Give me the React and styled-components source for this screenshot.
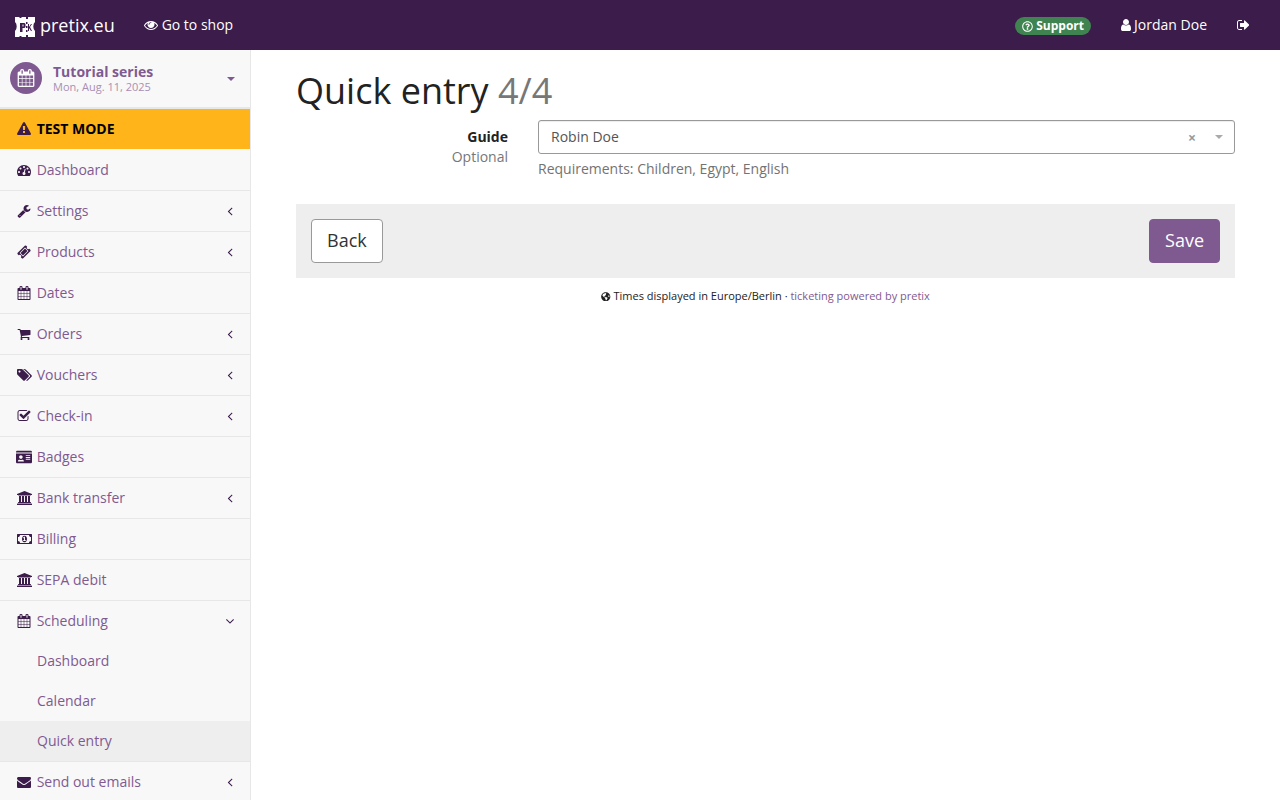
import React from "react";
import styled, { createGlobalStyle } from "styled-components";
import { FaGlobeAmericas, FaIdCard, FaRegQuestionCircle } from "react-icons/fa";

const GlobalStyle = createGlobalStyle`
  html, body {
    margin: 0;
    height: 100%;
    overflow: hidden;
    background: #fff;
  }
  body {
    font-family: "Open Sans", "Liberation Sans", sans-serif;
    font-size: 14px;
    line-height: 20px;
    color: #222;
  }
  * { box-sizing: border-box; }
`;

const Page = styled.div`
  width: 1280px;
  height: 800px;
  overflow: hidden;
  display: flex;
  flex-direction: column;
`;
const TopBar = styled.header`
  height: 50px;
  flex: none;
  background: #3b1c4a;
  color: #fff;
  display: flex;
  align-items: center;
`;
const Brand = styled.div`
  display: flex;
  align-items: center;
  gap: 5px;
  margin-left: 15px;
  font-size: 18px;
  width: 129px;
`;
const LogoMark = styled.svg`
  margin-top: 3px;
`;
const TopLink = styled.div`
  display: flex;
  align-items: center;
  gap: 3.64px;
`;
const Spacer = styled.div`flex: 1;`;
const SupportBadge = styled.div`
  display: flex;
  align-items: center;
  gap: 3px;
  height: 18px;
  padding: 0 7.5px;
  margin-right: 29.6px;
  margin-top: 2px;
  border-radius: 9px;
  background: #3f8450;
  font-size: 12px;
  font-weight: 700;
  svg { font-size: 11px; }
`;
const UserLink = styled(TopLink)`
  gap: 3px;
  margin-right: 30px;
`;
const LogoutLink = styled(TopLink)`margin-right: 30.75px;`;

const Body = styled.div`
  flex: 1;
  display: flex;
  min-height: 0;
`;
const Sidebar = styled.nav`
  width: 251px;
  flex: none;
  background: #f8f8f8;
  border-right: 1px solid #e7e7e7;
  overflow: hidden;
`;
const EventHeader = styled.div`
  height: 59px;
  display: flex;
  align-items: center;
  padding: 0 15px 1px 10px;
  border-bottom: 2px solid #e7e7e7;
`;
const EventIcon = styled.div`
  width: 32px;
  height: 32px;
  border-radius: 50%;
  background: #7f5a91;
  color: #fff;
  display: flex;
  align-items: center;
  justify-content: center;
  margin-right: 11px;
`;
const EventText = styled.div`
  flex: 1;
  color: #7f5a91;
  min-width: 0;
`;
const EventName = styled.div`
  font-weight: 700;
  font-size: 14px;
  line-height: 16px;
`;
const EventDate = styled.div`
  font-size: 11px;
  line-height: 13px;
  color: #a78fb3;
`;
const Caret = styled.span`
  width: 0;
  height: 0;
  border-left: 4px solid transparent;
  border-right: 4px solid transparent;
  border-top: 4px solid ${(p) => p.$color};
`;
const EventCaret = styled(Caret)`margin-top: 1px;`;
const TestMode = styled.div`
  height: 41px;
  display: flex;
  align-items: center;
  padding: 0 0 1px 15px;
  background: #ffb419;
  border-bottom: 1px solid #f8f8f8;
  color: #000;
  font-weight: 700;
`;
const NavRow = styled.div`
  height: ${(p) => (p.$open ? 40 : 41)}px;
  display: flex;
  align-items: center;
  padding: ${(p) => (p.$open ? "0 13px 0 15px" : "0 13px 1px 15px")};
  color: #7f5a91;
  border-bottom: ${(p) => (p.$open ? "none" : "1px solid #e7e7e7")};
`;
const SubRow = styled.div`
  height: ${(p) => (p.$last ? 41 : 40)}px;
  display: flex;
  align-items: center;
  padding: ${(p) => (p.$last ? "0 0 1px 37px" : "0 0 0 37px")};
  color: #7f5a91;
  background: ${(p) => (p.$active ? "#eeeeee" : "transparent")};
  border-bottom: ${(p) => (p.$last ? "1px solid #e7e7e7" : "none")};
`;
const IconBox = styled.span`
  width: 18px;
  flex: none;
  margin-right: 3.64px;
  display: flex;
  align-items: center;
  justify-content: center;
  color: #3b1c4a;
  font-size: 16px;
`;
const NavLabel = styled.span`flex: 1;`;
const ArrowBox = styled.span`
  display: flex;
  color: #3b1c4a;
`;

const Main = styled.main`
  flex: 1;
  padding: 0 45px;
  min-width: 0;
`;
const Title = styled.h1`
  margin: 21px 0 9px;
  font-size: 36px;
  font-weight: 400;
  line-height: 40px;
  color: #222;
`;
const Step = styled.span`color: #777;`;
const FormRow = styled.div`
  display: grid;
  grid-template-columns: 212px 1fr;
  column-gap: 30px;
`;
const LabelCol = styled.div`
  text-align: right;
  padding-top: 7px;
`;
const LabelName = styled.div`font-weight: 700;`;
const LabelHint = styled.div`color: #777;`;
const SelectBox = styled.div`
  height: 34px;
  display: flex;
  align-items: center;
  padding: 0 11px 0 12px;
  border: 1px solid #999;
  border-radius: 3px;
  box-shadow: inset 0 1px 1px rgba(0, 0, 0, 0.075);
  color: #555;
`;
const SelectValue = styled.span`flex: 1;`;
const SelectClear = styled.span`
  color: #999;
  font-size: 14px;
  font-weight: 700;
  margin: 2px 19px 0 0;
`;
const HelpText = styled.div`
  margin-top: 5px;
  color: #737373;
`;
const Actions = styled.div`
  margin-top: 25px;
  height: 74px;
  padding: 15px;
  background: #eeeeee;
  display: flex;
  justify-content: space-between;
`;
const Button = styled.button`
  height: 44px;
  padding: 0 15px 2px;
  font: inherit;
  font-size: 18px;
  border-radius: 4px;
  border: 1px solid ${(p) => (p.$primary ? "#7f5a91" : "#999")};
  background: ${(p) => (p.$primary ? "#7f5a91" : "#fff")};
  color: ${(p) => (p.$primary ? "#fff" : "#333")};
`;
const Footer = styled.footer`
  margin-top: 8px;
  text-align: center;
  font-size: 11px;
  line-height: 20px;
  svg { font-size: 9.5px; vertical-align: -1px; }
`;
const FooterLink = styled.span`color: #7f5a91;`;

// FontAwesome 4 glyphs, same 1792 grid as the font
const GLYPHS = {
  dashboard: { d: "M384 1152q0-53-37.5-90.5t-90.5-37.5-90.5 37.5-37.5 90.5 37.5 90.5 90.5 37.5 90.5-37.5 37.5-90.5zm192-448q0-53-37.5-90.5t-90.5-37.5-90.5 37.5-37.5 90.5 37.5 90.5 90.5 37.5 90.5-37.5 37.5-90.5zm428 481l101-382q6-26-7.5-48.5t-38.5-29.5-48 6.5-30 39.5l-101 382q-60 5-107 43.5t-63 98.5q-20 77 20 146t117 89 146-20 89-117q16-60-6-117t-72-91zm660-33q0-53-37.5-90.5t-90.5-37.5-90.5 37.5-37.5 90.5 37.5 90.5 90.5 37.5 90.5-37.5 37.5-90.5zm-640-640q0-53-37.5-90.5t-90.5-37.5-90.5 37.5-37.5 90.5 37.5 90.5 90.5 37.5 90.5-37.5 37.5-90.5zm448 192q0-53-37.5-90.5t-90.5-37.5-90.5 37.5-37.5 90.5 37.5 90.5 90.5 37.5 90.5-37.5 37.5-90.5zm320 448q0 261-141 483-19 29-54 29h-1402q-35 0-54-29-141-221-141-483 0-182 71-348t191-286 286-191 348-71 348 71 286 191 191 286 71 348z" },
  wrench: { d: "M448 1472q0-26-19-45t-45-19-45 19-19 45 19 45 45 19 45-19 19-45zm644-420l-682 682q-37 37-90 37-52 0-91-37l-106-108q-38-36-38-90 0-53 38-91l681-681q39 98 114.5 173.5t173.5 114.5zm634-435q0 39-23 106-47 134-164.5 217.5t-258.5 83.5q-185 0-316.5-131.5t-131.5-316.5 131.5-316.5 316.5-131.5q58 0 121.5 16.5t107.5 46.5q16 11 16 28t-16 28l-293 169v224l193 111q5-3 79-48.5t135.5-81 70.5-35.5q15 0 23.5 10t8.5 25z" },
  ticket: { d: "M1024 452l316 316-572 572-316-316zm-211 979l618-618q19-19 19-45t-19-45l-362-362q-18-18-45-18t-45 18l-618 618q-19 19-19 45t19 45l362 362q18 18 45 18t45-18zm889-637l-907 908q-37 37-90.5 37t-90.5-37l-126-126q56-56 56-136t-56-136-136-56-136 56l-125-126q-37-37-37-90.5t37-90.5l907-906q37-37 90.5-37t90.5 37l125 125q-56 56-56 136t56 136 136 56 136-56l126 125q37 37 37 90.5t-37 90.5z" },
  calendar: { d: "M192 1664h288v-288h-288v288zm352 0h320v-288h-320v288zm-352-352h288v-320h-288v320zm352 0h320v-320h-320v320zm-352-384h288v-288h-288v288zm736 736h320v-288h-320v288zm-384-736h320v-288h-320v288zm768 736h288v-288h-288v288zm-384-352h320v-320h-320v320zm-352-864v-288q0-13-9.5-22.5t-22.5-9.5h-64q-13 0-22.5 9.5t-9.5 22.5v288q0 13 9.5 22.5t22.5 9.5h64q13 0 22.5-9.5t9.5-22.5zm736 864h288v-320h-288v320zm-384-384h320v-288h-320v288zm384 0h288v-288h-288v288zm32-480v-288q0-13-9.5-22.5t-22.5-9.5h-64q-13 0-22.5 9.5t-9.5 22.5v288q0 13 9.5 22.5t22.5 9.5h64q13 0 22.5-9.5t9.5-22.5zm384-64v1280q0 52-38 90t-90 38h-1408q-52 0-90-38t-38-90v-1280q0-52 38-90t90-38h128v-96q0-66 47-113t113-47h64q66 0 113 47t47 113v96h384v-96q0-66 47-113t113-47h64q66 0 113 47t47 113v96h128q52 0 90 38t38 90z" },
  cart: { d: "M704 1536q0 52-38 90t-90 38-90-38-38-90 38-90 90-38 90 38 38 90zm896 0q0 52-38 90t-90 38-90-38-38-90 38-90 90-38 90 38 38 90zm128-1088v512q0 24-16.5 42.5t-40.5 21.5l-1044 122q13 60 13 70 0 16-24 64h920q26 0 45 19t19 45-19 45-45 19h-1024q-26 0-45-19t-19-45q0-11 8-31.5t16-36 21.5-40 15.5-29.5l-177-823h-204q-26 0-45-19t-19-45 19-45 45-19h256q16 0 28.5 6.5t19.5 15.5 13 24.5 8 26 5.5 29.5 4.5 26h1201q26 0 45 19t19 45z" },
  tags: { box: "-64 0 1920 1792", d: "M384 448q0-53-37.5-90.5t-90.5-37.5-90.5 37.5-37.5 90.5 37.5 90.5 90.5 37.5 90.5-37.5 37.5-90.5zm1067 576q0 53-37 90l-491 492q-39 37-91 37-53 0-90-37l-715-716q-38-37-64.5-101t-26.5-117v-416q0-52 38-90t90-38h416q53 0 117 26.5t102 64.5l715 714q37 39 37 91zm384 0q0 53-37 90l-491 492q-39 37-91 37-36 0-59-14t-53-45l470-470q37-37 37-90 0-52-37-91l-715-714q-38-38-102-64.5t-117-26.5h224q53 0 117 26.5t102 64.5l715 714q37 39 37 91z" },
  check: { d: "M1472 930v318q0 119-84.5 203.5t-203.5 84.5h-832q-119 0-203.5-84.5t-84.5-203.5v-832q0-119 84.5-203.5t203.5-84.5h832q63 0 117 25 15 7 18 23 3 17-9 29l-49 49q-10 10-23 10-3 0-9-2-23-6-45-6h-832q-66 0-113 47t-47 113v832q0 66 47 113t113 47h832q66 0 113-47t47-113v-254q0-13 9-22l64-64q10-10 23-10 6 0 12 3 20 8 20 29zm231-489l-814 814q-24 24-57 24t-57-24l-430-430q-24-24-24-57t24-57l110-110q24-24 57-24t57 24l263 263 647-647q24-24 57-24t57 24l110 110q24 24 24 57t-24 57z" },
  bank: { box: "0 0 1920 1792", d: "M960 0l960 384v128h-128q0 26-20.5 45t-48.5 19h-1526q-28 0-48.5-19t-20.5-45h-128v-128zm-704 640h256v768h128v-768h256v768h128v-768h256v768h128v-768h256v768h59q28 0 48.5 19t20.5 45v64h-1664v-64q0-26 20.5-45t48.5-19h59v-768zm1595 960q28 0 48.5 19t20.5 45v128h-1920v-128q0-26 20.5-45t48.5-19h1782z" },
  money: { box: "-64 0 1920 1792", d: "M704 1152h384v-96h-128v-448h-114l-148 137 77 80q42-37 55-57h2v288h-128v96zm512-256q0 70-21 142t-59.5 134-101.5 101-138 39-138-39-101.5-101-59.5-134-21-142 21-142 59.5-134 101.5-101 138-39 138 39 101.5 101 59.5 134 21 142zm512 256v-512q-106 0-181-75t-75-181h-1152q0 106-75 181t-181 75v512q106 0 181 75t75 181h1152q0-106 75-181t181-75zm128-832v1152q0 26-19 45t-45 19h-1792q-26 0-45-19t-19-45v-1152q0-26 19-45t45-19h1792q26 0 45 19t19 45z" },
  envelope: { d: "M1792 710v794q0 66-47 113t-113 47h-1472q-66 0-113-47t-47-113v-794q44 49 101 87 362 246 497 345 57 42 92.5 65.5t94.5 48 110 24.5h2q51 0 110-24.5t94.5-48 92.5-65.5q170-123 498-345 57-39 100-87zm0-294q0 79-49 151t-122 123q-376 261-468 325-10 7-42.5 30.5t-54 38-52 32.5-57.5 27-50 9h-2q-23 0-50-9t-57.5-27-52-32.5-54-38-42.5-30.5q-91-64-262-182.5t-205-142.5q-62-42-117-115.5t-55-136.5q0-78 41.5-130t118.5-52h1472q65 0 112.5 47t47.5 113z" },
  warning: { d: "M1024 1375v-190q0-14-9.5-23.5t-22.5-9.5h-192q-13 0-22.5 9.5t-9.5 23.5v190q0 14 9.5 23.5t22.5 9.5h192q13 0 22.5-9.5t9.5-23.5zm-2-374l18-459q0-12-10-19-13-11-24-11h-220q-11 0-24 11-10 7-10 21l17 457q0 10 10 16.5t24 6.5h185q14 0 23.5-6.5t10.5-16.5zm-14-934l768 1408q35 63-2 126-17 29-46.5 46t-63.5 17h-1536q-34 0-63.5-17t-46.5-46q-37-63-2-126l768-1408q17-31 47-49t65-18 65 18 47 49z" },
  eye: { d: "M1664 960q-152-236-381-353 61 104 61 225 0 185-131.5 316.5t-316.5 131.5-316.5-131.5-131.5-316.5q0-121 61-225-229 117-381 353 133 205 333.5 326.5t434.5 121.5 434.5-121.5 333.5-326.5zm-720-384q0-20-14-34t-34-14q-125 0-214.5 89.5t-89.5 214.5q0 20 14 34t34 14 34-14 14-34q0-86 61-147t147-61q20 0 34-14t14-34zm848 384q0 34-20 69-140 230-376.5 368.5t-499.5 138.5-499.5-139-376.5-368q-20-35-20-69t20-69q140-229 376.5-368t499.5-139 499.5 139 376.5 368q20 35 20 69z" },
  user: { box: "256 0 1280 1792", d: "M1536 1399q0 109-62.5 187t-150.5 78h-854q-88 0-150.5-78t-62.5-187q0-85 8.5-160.5t31.5-152 58.5-131 94-89 134.5-34.5q131 128 313 128t313-128q76 0 134.5 34.5t94 89 58.5 131 31.5 152 8.5 160.5zm-256-887q0 159-112.5 271.5t-271.5 112.5-271.5-112.5-112.5-271.5 112.5-271.5 271.5-112.5 271.5 112.5 112.5 271.5z" },
  signOut: { box: "64 0 1568 1792", d: "M704 1440q0 4 1 20t.5 26.5-3 23.5-10 19.5-20.5 6.5h-320q-119 0-203.5-84.5t-84.5-203.5v-704q0-119 84.5-203.5t203.5-84.5h320q13 0 22.5 9.5t9.5 22.5q0 4 1 20t.5 26.5-3 23.5-10 19.5-20.5 6.5h-320q-66 0-113 47t-47 113v704q0 66 47 113t113 47h312l11.5 1 11.5 3 8 5.5 7 9 2 13.5zm928-544q0 26-19 45l-544 544q-19 19-45 19t-45-19-19-45v-288h-448q-26 0-45-19t-19-45v-384q0-26 19-45t45-19h448v-288q0-26 19-45t45-19 45 19l544 544q19 19 19 45z" },
  angleLeft: { d: "M1203 544q0 13-10 23l-393 393 393 393q10 10 10 23t-10 23l-50 50q-10 10-23 10t-23-10l-466-466q-10-10-10-23t10-23l466-466q10-10 23-10t23 10l50 50q10 10 10 23z" },
  angleDown: { d: "M1395 736q0 13-10 23l-466 466q-10 10-23 10t-23-10l-466-466q-10-10-10-23t10-23l50-50q10-10 23-10t23 10l393 393 393-393q10-10 23-10t23 10l50 50q10 10 10 23z" },
};

function Glyph({ name, size = 14 }) {
  const { d, box = "0 0 1792 1792" } = GLYPHS[name];
  const width = (Number(box.split(" ")[2]) / 1792) * size;
  return (
    <svg width={width} height={size} viewBox={box} fill="currentColor" aria-hidden="true">
      <path d={d} />
    </svg>
  );
}

const Logo = () => (
  <LogoMark width="20" height="20" viewBox="0 0 20 20" aria-hidden="true">
    <path
      fill="#fff"
      d="M0 0h4l1 1h1l1-1h4v2h2v-2h7v5a3 5 0 0 0 0 9v6h-7v-2h-2v2H7l-1-1H5l-1 1H0v-6a3 5 0 0 0 0-9z"
    />
    <path fill="#3b1c4a" d="M11 5h1.5v2H11zM11 9h1.5v2H11zM11 13h1.5v2H11z" />
    <path fill="#3b1c4a" fillRule="evenodd" d="M5 6h4.5l1 1v3l-1 1H7.5v4H5zM7.5 7.5v2h1v-2z" />
    <path fill="#3b1c4a" d="M13 7h1v3l2-3h1l-2 3 2 4h-1l-2-3v3h-1z" />
  </LogoMark>
);

const items = [
  { label: "Dashboard", icon: <Glyph name="dashboard" /> },
  { label: "Settings", icon: <Glyph name="wrench" />, arrow: true },
  { label: "Products", icon: <Glyph name="ticket" />, arrow: true },
  { label: "Dates", icon: <Glyph name="calendar" /> },
  { label: "Orders", icon: <Glyph name="cart" />, arrow: true },
  { label: "Vouchers", icon: <Glyph name="tags" />, arrow: true },
  { label: "Check-in", icon: <Glyph name="check" />, arrow: true },
  { label: "Badges", icon: <FaIdCard /> },
  { label: "Bank transfer", icon: <Glyph name="bank" />, arrow: true },
  { label: "Billing", icon: <Glyph name="money" /> },
  { label: "SEPA debit", icon: <Glyph name="bank" /> },
];

export default function App() {
  return (
    <Page>
      <GlobalStyle />
      <TopBar>
        <Brand>
          <Logo />
          pretix.eu
        </Brand>
        <TopLink>
          <Glyph name="eye" />
          Go to shop
        </TopLink>
        <Spacer />
        <SupportBadge>
          <FaRegQuestionCircle />
          Support
        </SupportBadge>
        <UserLink>
          <Glyph name="user" />
          Jordan Doe
        </UserLink>
        <LogoutLink>
          <Glyph name="signOut" />
        </LogoutLink>
      </TopBar>
      <Body>
        <Sidebar>
          <EventHeader>
            <EventIcon>
              <Glyph name="calendar" size={18} />
            </EventIcon>
            <EventText>
              <EventName>Tutorial series</EventName>
              <EventDate>Mon, Aug. 11, 2025</EventDate>
            </EventText>
            <EventCaret $color="#7f5a91" />
          </EventHeader>
          <TestMode>
            <IconBox>
              <Glyph name="warning" />
            </IconBox>
            TEST MODE
          </TestMode>
          {items.map((item) => (
            <NavRow key={item.label}>
              <IconBox>{item.icon}</IconBox>
              <NavLabel>{item.label}</NavLabel>
              {item.arrow && (
                <ArrowBox>
                  <Glyph name="angleLeft" />
                </ArrowBox>
              )}
            </NavRow>
          ))}
          <NavRow $open>
            <IconBox>
              <Glyph name="calendar" />
            </IconBox>
            <NavLabel>Scheduling</NavLabel>
            <ArrowBox>
              <Glyph name="angleDown" />
            </ArrowBox>
          </NavRow>
          <SubRow>Dashboard</SubRow>
          <SubRow>Calendar</SubRow>
          <SubRow $active $last>
            Quick entry
          </SubRow>
          <NavRow>
            <IconBox>
              <Glyph name="envelope" />
            </IconBox>
            <NavLabel>Send out emails</NavLabel>
            <ArrowBox>
              <Glyph name="angleLeft" />
            </ArrowBox>
          </NavRow>
        </Sidebar>
        <Main>
          <Title>
            Quick entry <Step>4/4</Step>
          </Title>
          <FormRow>
            <LabelCol>
              <LabelName>Guide</LabelName>
              <LabelHint>Optional</LabelHint>
            </LabelCol>
            <div>
              <SelectBox>
                <SelectValue>Robin Doe</SelectValue>
                <SelectClear>×</SelectClear>
                <Caret $color="#aaa" />
              </SelectBox>
              <HelpText>Requirements: Children, Egypt, English</HelpText>
            </div>
          </FormRow>
          <Actions>
            <Button>Back</Button>
            <Button $primary>Save</Button>
          </Actions>
          <Footer>
            <FaGlobeAmericas /> Times displayed in Europe/Berlin ·{" "}
            <FooterLink>ticketing powered by pretix</FooterLink>
          </Footer>
        </Main>
      </Body>
    </Page>
  );
}
